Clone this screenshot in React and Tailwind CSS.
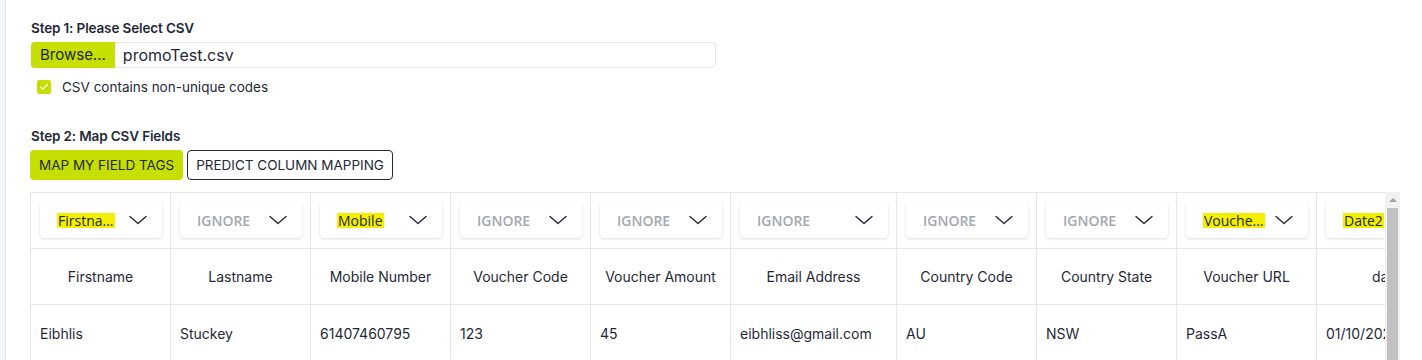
import { Check } from "lucide-react";

const COLUMNS = [
  { key: "first", map: "Firstna...", header: "Firstname", value: "Eibhlis", width: "w-[140px]" },
  { key: "last", map: null, header: "Lastname", value: "Stuckey", width: "w-[140px]" },
  { key: "mobile", map: "Mobile", header: "Mobile Number", value: "61407460795", width: "w-[140px]" },
  { key: "code", map: null, header: "Voucher Code", value: "123", width: "w-[140px]" },
  { key: "amount", map: null, header: "Voucher Amount", value: "45", width: "w-[140px]" },
  { key: "email", map: null, header: "Email Address", value: "eibhliss@gmail.com", width: "w-[166px]" },
  { key: "country", map: null, header: "Country Code", value: "AU", width: "w-[140px]" },
  { key: "state", map: null, header: "Country State", value: "NSW", width: "w-[140px]" },
  { key: "url", map: "Vouche...", header: "Voucher URL", value: "PassA", width: "w-[140px]" },
  { key: "date", map: "Date2", header: "date", value: "01/10/2024", width: "w-[140px]" },
];

function Chevron() {
  return (
    <svg width="18" height="10" viewBox="0 0 18 10" className="shrink-0">
      <polyline points="1,1.5 9,8.5 17,1.5" fill="none" stroke="#1f2937" strokeWidth="1.4" strokeLinecap="round" strokeLinejoin="round" />
    </svg>
  );
}

function MapSelect({ value }) {
  return (
    <div className="h-[36px] rounded-[4px] bg-white shadow-[0_1px_3px_rgba(0,0,0,0.14)] flex items-center justify-between pl-[17px] pr-[15px] font-['Open_Sans',sans-serif] text-[14px]">
      {value ? (
        <span className="bg-[#f3ef00] text-[#1f2937] font-medium leading-[15px] px-px whitespace-nowrap">{value}</span>
      ) : (
        <span className="text-[#a3a7b0] font-semibold whitespace-nowrap">IGNORE</span>
      )}
      <Chevron />
    </div>
  );
}

export default function App() {
  return (
    <div className="flex h-[360px] overflow-hidden bg-white font-['Inter',sans-serif] text-[#1f2937]">
      <div className="w-[6px] shrink-0 bg-[#f4f5f7] border-r border-[#e3e5e8]" />

      <div className="flex-1 min-w-0 pl-[25px] pt-[19px]">
        <div className="text-[13.5px] font-semibold leading-[18px] tracking-[-0.01em]">Step 1: Please Select CSV</div>

        <div className="mt-[5px] w-[685px] h-[26px] flex items-stretch border border-[#e6e7ea] rounded-[4px]">
          <div className="bg-[#c6df00] rounded-l-[4px] -my-px -ml-px px-[9px] flex items-center text-[15px]">Browse...</div>
          <div className="pl-[8px] flex items-center text-[16px]">promoTest.csv</div>
        </div>

        <label className="mt-[9px] ml-[6px] flex items-center gap-[11px] text-[13.5px]">
          <span className="w-[14px] h-[14px] rounded-[2px] bg-[#c6df00] flex items-center justify-center">
            <Check className="w-[10px] h-[10px] text-white" strokeWidth={3} />
          </span>
          CSV contains non-unique codes
        </label>

        <div className="mt-[30px] text-[13.5px] font-semibold leading-[18px] tracking-[-0.01em]">Step 2: Map CSV Fields</div>

        <div className="mt-[5px] -ml-px flex gap-[4px]">
          <button className="h-[30px] px-[9px] rounded-[4px] bg-[#c6df00] text-[13.5px] uppercase">Map my field tags</button>
          <button className="h-[30px] px-[8px] rounded-[4px] border border-[#1f2937] bg-white text-[13.5px] uppercase">Predict column mapping</button>
        </div>

        <div className="mt-[12px] -ml-px flex">
          <div className="w-[1355px] overflow-hidden border-t border-l border-[#e5e6e8]">
            <div className="flex w-max">
              {COLUMNS.map((c) => (
                <div key={c.key} className={`${c.width} shrink-0 border-r border-[#e5e6e8]`}>
                  <div className="h-[56px] border-b border-[#e5e6e8] pl-[9px] pr-[8px] pt-[9px]">
                    <MapSelect value={c.map} />
                  </div>
                  <div className="h-[56px] border-b border-[#e5e6e8] flex items-center justify-center text-[14px] whitespace-nowrap">
                    {c.header}
                  </div>
                  <div className="h-[56px] flex items-center pl-[9px] text-[14px] whitespace-nowrap">{c.value}</div>
                </div>
              ))}
            </div>
          </div>
          <div className="w-[15px] shrink-0 bg-[#f1f1f1] flex flex-col items-center">
            <div className="h-[16px] flex items-center justify-center">
              <div className="w-0 h-0 border-l-[4px] border-r-[4px] border-b-[4px] border-l-transparent border-r-transparent border-b-[#a3a3a3]" />
            </div>
            <div className="w-[11px] flex-1 bg-[#c1c1c1]" />
          </div>
        </div>
      </div>
    </div>
  );
}
